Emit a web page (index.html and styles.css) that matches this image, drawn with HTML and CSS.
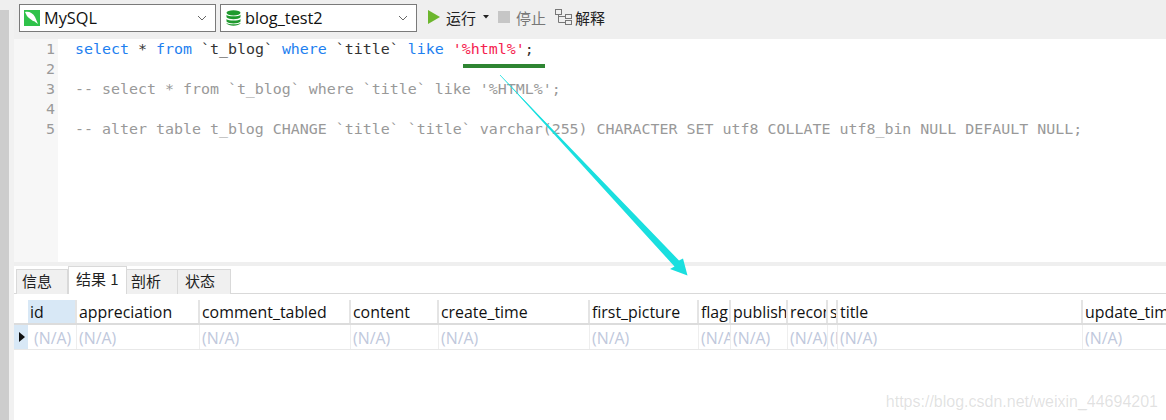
FILE: index.html
```html
<!DOCTYPE html>
<html lang="zh">
<head>
<meta charset="utf-8">
<title>Query</title>
<link rel="stylesheet" href="styles.css">
</head>
<body>
<div class="app">
  <div class="rail"></div>
  <div class="main">
    <div class="toolbar">
      <div class="select sel-conn">
        <svg class="sel-icon" width="16" height="16" viewBox="0 0 16 16"><rect width="16" height="16" fill="#2fc24a"/><path d="M1 2c4-1 8 1 10 5 1 2 2 5 3 7-2-1-3-3-5-3-2-2-5-3-6-5L1 2z" fill="#fff"/></svg>
        <span>MySQL</span>
        <svg class="chev" width="10" height="6" viewBox="0 0 10 6"><path d="M1 1l4 4 4-4" fill="none" stroke="#666" stroke-width="1"/></svg>
      </div>
      <div class="select sel-db">
        <svg class="sel-icon" width="15" height="16" viewBox="0 0 15 16"><g fill="#1f9a2e"><ellipse cx="7.5" cy="2.8" rx="7" ry="2.6"/><path d="M.5 4.800c1.500 2 12.500 2 14 0v2.500c-1.500 2.500-12.500 2.500-14 0z"/><path d="M.5 9c1.500 2 12.500 2 14 0v2.500c-1.500 2.500-12.500 2.500-14 0z"/><path d="M.5 12.800c1.500 2 12.500 2 14 0v.5c-1.500 3.200-12.500 3.200-14 0z"/></g></svg>
        <span>blog_test2</span>
        <svg class="chev" width="10" height="6" viewBox="0 0 10 6"><path d="M1 1l4 4 4-4" fill="none" stroke="#666" stroke-width="1"/></svg>
      </div>
      <button class="tool tool-run">
        <svg width="12" height="14" viewBox="0 0 12 14"><path d="M0 0l12 7L0 14z" fill="#6cb62d"/></svg>
        <span>运行</span>
        <svg class="caret" width="6" height="4" viewBox="0 0 6 4"><path d="M0 0h6L3 3.500z" fill="#222"/></svg>
      </button>
      <button class="tool tool-stop">
        <i class="stop-box"></i>
        <span>停止</span>
      </button>
      <button class="tool tool-explain">
        <svg width="17" height="17" viewBox="0 0 17 17" fill="none" stroke="#777"><rect x=".5" y=".5" width="6" height="5"/><rect x="10.500" y="5.500" width="6" height="4"/><rect x="10.500" y="11.500" width="6" height="4"/><path d="M3.500 5.500v8h7M3.500 7.500h7"/></svg>
        <span>解释</span>
      </button>
    </div>

    <div class="editor">
      <div class="gutter">
        <div>1</div><div>2</div><div>3</div><div>4</div><div>5</div>
      </div>
      <div class="code">
        <div class="line"><span class="kw">select</span> * <span class="kw">from</span> `t_blog` <span class="kw">where</span> `title` <span class="kw">like</span> <span class="str">'%html%'</span>;</div>
        <div class="line">&nbsp;</div>
        <div class="line cm">-- select * from `t_blog` where `title` like '%HTML%';</div>
        <div class="line">&nbsp;</div>
        <div class="line cm">-- alter table t_blog CHANGE `title` `title` varchar(255) CHARACTER SET utf8 COLLATE utf8_bin NULL DEFAULT NULL;</div>
      </div>
    </div>

    <div class="divider"></div>

    <div class="tabs">
      <div class="tab t-info">信息</div>
      <div class="tab active">结果 1</div>
      <div class="tab t-prof">剖析</div>
      <div class="tab t-stat">状态</div>
    </div>

    <div class="grid">
      <div class="row head">
        <div class="marker"></div>
        <div class="cell c-id current">id</div>
        <div class="cell c-app">appreciation</div>
        <div class="cell c-com">comment_tabled</div>
        <div class="cell c-con">content</div>
        <div class="cell c-cre">create_time</div>
        <div class="cell c-fir">first_picture</div>
        <div class="cell c-fla">flag</div>
        <div class="cell c-pub">publish</div>
        <div class="cell c-rec">recommend</div>
        <div class="cell c-s">share</div>
        <div class="cell c-tit">title</div>
        <div class="cell c-upd">update_time</div>
      </div>
      <div class="row data">
        <div class="marker mark-cur"><i class="tri"></i></div>
        <div class="cell c-id na">(N/A)</div>
        <div class="cell c-app">(N/A)</div>
        <div class="cell c-com">(N/A)</div>
        <div class="cell c-con">(N/A)</div>
        <div class="cell c-cre">(N/A)</div>
        <div class="cell c-fir">(N/A)</div>
        <div class="cell c-fla">(N/A)</div>
        <div class="cell c-pub">(N/A)</div>
        <div class="cell c-rec">(N/A)</div>
        <div class="cell c-s">(N/A)</div>
        <div class="cell c-tit">(N/A)</div>
        <div class="cell c-upd">(N/A)</div>
      </div>
    </div>
  </div>
</div>

<svg class="annot" width="1166" height="420" viewBox="0 0 1166 420">
  <rect x="463" y="64" width="82" height="4" fill="#2e8532"/>
  <path d="M500 75L590 170" stroke="#1adfdf" stroke-width=".8" fill="none"/>
  <path d="M500 75L679 260.500L683 258.500L687.500 275.500L670 269L674.500 266.500Z" fill="#1adfdf"/>
</svg>
<div class="watermark">https://blog.csdn.net/weixin_44694201</div>
</body>
</html>
```
FILE: styles.css
```css
* { box-sizing: border-box; }
html, body { margin: 0; padding: 0; }
body {
  width: 1166px;
  height: 420px;
  overflow: hidden;
  background: #fff;
  font-family: "Open Sans", "Noto Sans CJK SC", sans-serif;
  font-size: 15.900px;
  color: #111;
  position: relative;
}
.app { display: flex; height: 420px; background: linear-gradient(#efefef 39px, #fff 39px); }
.rail {
  width: 14px;
  flex: none;
  margin-top: 10px;
  background: linear-gradient(to right, #cdcdcd 9px, #f1f1f1 9px);
}
.main { flex: 1; min-width: 0; display: flex; flex-direction: column; overflow: hidden; }

.toolbar {
  height: 39px;
  flex: none;
  display: flex;
  align-items: flex-start;
  padding: 4px 0 0 5px;
  background: #efefef;
}
.select {
  height: 28px;
  background: #fff;
  border: 1px solid #7a7a7a;
  display: flex;
  align-items: center;
  padding-left: 4px;
  gap: 4px;
  font-size: 16.300px;
}
.sel-conn { width: 197px; }
.sel-db { width: 197px; margin-left: 4px; padding-left: 5px; }
.sel-icon { flex: none; }
.chev { margin-left: auto; margin-right: 8px; }
.tool {
  border: 0;
  background: none;
  padding: 0 0 2px;
  font-family: "Noto Sans CJK SC", sans-serif;
  font-size: 15px;
  color: #222;
  display: flex;
  align-items: center;
  height: 28px;
}
.tool-run { margin-left: 11px; gap: 6px; }
.caret { margin-left: 1px; }
.tool-stop { margin-left: 9px; gap: 6px; color: #777; }
.stop-box { width: 12px; height: 12px; background: #c6c6c6; display: block; }
.tool-explain { margin-left: 9px; gap: 3px; }

.editor { height: 223px; flex: none; display: flex; background: #fff; }
.gutter {
  width: 44px;
  flex: none;
  background: #f7f7f7;
  text-align: right;
  padding-right: 3px;
  font-family: "DejaVu Sans Mono", monospace;
  font-size: 14.950px;
  line-height: 20px;
  color: #9a9a9a;
}
.code {
  padding-left: 17px;
  font-family: "DejaVu Sans Mono", monospace;
  font-size: 14.950px;
  line-height: 20px;
  color: #333;
}
.line { white-space: pre; height: 20px; }
.kw { color: #1e7ff0; }
.str { color: #f5224f; }
.cm { color: #999; }

.divider { height: 4px; flex: none; background: #efefef; }

.tabs {
  height: 28px;
  flex: none;
  display: flex;
  align-items: flex-end;
  padding-left: 2px;
  border-bottom: 1px solid #d9d9d9;
  font-family: "Noto Sans CJK SC", sans-serif;
  font-size: 15px;
}
.tab {
  height: 25px;
  background: #f0f0f0;
  border: 1px solid #d9d9d9;
  border-bottom: 0;
  padding: 0 0 0 5px;
  line-height: 22px;
  margin-bottom: -1px;
  color: #222;
  white-space: nowrap;
}
.t-info { width: 52px; }
.t-prof { width: 51px; border-left: 0; padding-left: 4px; }
.t-stat { width: 53px; border-left: 0; padding-left: 7px; }
.tab.active {
  width: 59px;
  height: 28px;
  background: #fff;
  padding-left: 7px;
  line-height: 23px;
  word-spacing: 1px;
}

.grid { padding-top: 6px; }
.row { display: flex; }
.head { height: 25px; border-bottom: 2px solid #dcdcdc; color: #111; }
.data { height: 25px; border-bottom: 1px solid #e8e8e8; color: #c0c8dc; }
.marker { width: 14px; flex: none; }
.mark-cur { background: #d8e8f6; display: flex; align-items: center; padding-left: 5px; }
.tri {
  width: 0; height: 0;
  border-left: 6px solid #111;
  border-top: 5px solid transparent;
  border-bottom: 5px solid transparent;
  display: block;
}
.cell {
  flex: none;
  overflow: hidden;
  white-space: nowrap;
  padding-left: 2px;
  border-right: 1px solid #eeeeee;
  line-height: 25px;
}
.data .cell { line-height: 27px; }
.head .cell { border-right: 2px solid #e4e4e4; }
.current { background: #d8e8f6; }
.na { padding-left: 6px; }
.c-id { width: 49px; }
.c-app { width: 123px; }
.c-com { width: 151px; }
.c-con { width: 88px; }
.c-cre { width: 151px; }
.c-fir { width: 109px; }
.c-fla { width: 32px; }
.c-pub { width: 57px; }
.c-rec { width: 40px; }
.c-s { width: 10px; }
.c-tit { width: 245px; }
.c-upd { width: 90px; border-right: 0 !important; }

.annot { position: absolute; left: 0; top: 0; pointer-events: none; }
.watermark {
  position: absolute;
  right: 8px;
  top: 392px;
  font-family: "Liberation Sans", sans-serif;
  font-size: 16px;
  line-height: 20px;
  color: rgba(120,120,120,.22);
  white-space: nowrap;
}
```
